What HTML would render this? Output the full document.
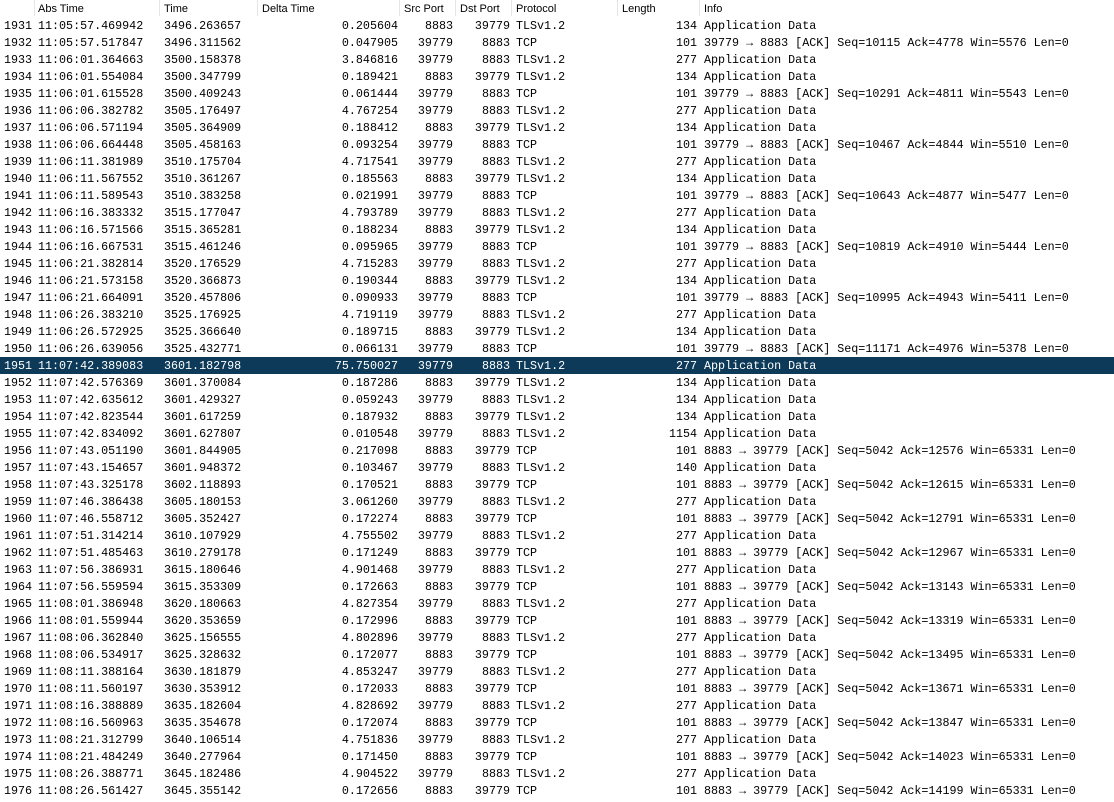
<!DOCTYPE html>
<html><head><meta charset="utf-8"><style>
body{margin:0;width:1114px;height:802px;background:#fff;overflow:hidden;position:relative;font-family:"Liberation Mono",monospace;font-size:11.7px;color:#000}
.h{position:absolute;top:0;left:0;width:1114px;height:17px;background:#fff;font-family:"Liberation Sans",sans-serif;font-size:11px;color:#000}
.h span{position:absolute;top:3px}
.h i{position:absolute;top:0;width:1px;height:16px;background:#e5e5e5}
.r{position:absolute;left:0;width:1114px;height:17px;line-height:17px;white-space:pre}
.r span{position:absolute;top:1px}
.sel{background:#0c3a58;color:#fff}
.n{left:4px}.a{left:38px}.t{left:164px}
.d{right:716px}.s{right:661px}.p{right:604px}
.pr{left:516px}.l{right:417px}.i{left:704px}
</style></head><body>
<div class="h">
<span style="left:38px">Abs Time</span><i style="left:34px"></i>
<span style="left:164px">Time</span><i style="left:159px"></i>
<span style="left:262px">Delta Time</span><i style="left:257px"></i>
<span style="left:404px">Src Port</span><i style="left:399px"></i>
<span style="left:460px">Dst Port</span><i style="left:455px"></i>
<span style="left:516px">Protocol</span><i style="left:511px"></i>
<span style="left:622px">Length</span><i style="left:617px"></i>
<span style="left:704px">Info</span><i style="left:699px"></i>
</div>
<div class="r" style="top:17px"><span class="n">1931</span><span class="a">11:05:57.469942</span><span class="t">3496.263657</span><span class="d">0.205604</span><span class="s">8883</span><span class="p">39779</span><span class="pr">TLSv1.2</span><span class="l">134</span><span class="i">Application Data</span></div>
<div class="r" style="top:34px"><span class="n">1932</span><span class="a">11:05:57.517847</span><span class="t">3496.311562</span><span class="d">0.047905</span><span class="s">39779</span><span class="p">8883</span><span class="pr">TCP</span><span class="l">101</span><span class="i">39779 → 8883 [ACK] Seq=10115 Ack=4778 Win=5576 Len=0</span></div>
<div class="r" style="top:51px"><span class="n">1933</span><span class="a">11:06:01.364663</span><span class="t">3500.158378</span><span class="d">3.846816</span><span class="s">39779</span><span class="p">8883</span><span class="pr">TLSv1.2</span><span class="l">277</span><span class="i">Application Data</span></div>
<div class="r" style="top:68px"><span class="n">1934</span><span class="a">11:06:01.554084</span><span class="t">3500.347799</span><span class="d">0.189421</span><span class="s">8883</span><span class="p">39779</span><span class="pr">TLSv1.2</span><span class="l">134</span><span class="i">Application Data</span></div>
<div class="r" style="top:85px"><span class="n">1935</span><span class="a">11:06:01.615528</span><span class="t">3500.409243</span><span class="d">0.061444</span><span class="s">39779</span><span class="p">8883</span><span class="pr">TCP</span><span class="l">101</span><span class="i">39779 → 8883 [ACK] Seq=10291 Ack=4811 Win=5543 Len=0</span></div>
<div class="r" style="top:102px"><span class="n">1936</span><span class="a">11:06:06.382782</span><span class="t">3505.176497</span><span class="d">4.767254</span><span class="s">39779</span><span class="p">8883</span><span class="pr">TLSv1.2</span><span class="l">277</span><span class="i">Application Data</span></div>
<div class="r" style="top:119px"><span class="n">1937</span><span class="a">11:06:06.571194</span><span class="t">3505.364909</span><span class="d">0.188412</span><span class="s">8883</span><span class="p">39779</span><span class="pr">TLSv1.2</span><span class="l">134</span><span class="i">Application Data</span></div>
<div class="r" style="top:136px"><span class="n">1938</span><span class="a">11:06:06.664448</span><span class="t">3505.458163</span><span class="d">0.093254</span><span class="s">39779</span><span class="p">8883</span><span class="pr">TCP</span><span class="l">101</span><span class="i">39779 → 8883 [ACK] Seq=10467 Ack=4844 Win=5510 Len=0</span></div>
<div class="r" style="top:153px"><span class="n">1939</span><span class="a">11:06:11.381989</span><span class="t">3510.175704</span><span class="d">4.717541</span><span class="s">39779</span><span class="p">8883</span><span class="pr">TLSv1.2</span><span class="l">277</span><span class="i">Application Data</span></div>
<div class="r" style="top:170px"><span class="n">1940</span><span class="a">11:06:11.567552</span><span class="t">3510.361267</span><span class="d">0.185563</span><span class="s">8883</span><span class="p">39779</span><span class="pr">TLSv1.2</span><span class="l">134</span><span class="i">Application Data</span></div>
<div class="r" style="top:187px"><span class="n">1941</span><span class="a">11:06:11.589543</span><span class="t">3510.383258</span><span class="d">0.021991</span><span class="s">39779</span><span class="p">8883</span><span class="pr">TCP</span><span class="l">101</span><span class="i">39779 → 8883 [ACK] Seq=10643 Ack=4877 Win=5477 Len=0</span></div>
<div class="r" style="top:204px"><span class="n">1942</span><span class="a">11:06:16.383332</span><span class="t">3515.177047</span><span class="d">4.793789</span><span class="s">39779</span><span class="p">8883</span><span class="pr">TLSv1.2</span><span class="l">277</span><span class="i">Application Data</span></div>
<div class="r" style="top:221px"><span class="n">1943</span><span class="a">11:06:16.571566</span><span class="t">3515.365281</span><span class="d">0.188234</span><span class="s">8883</span><span class="p">39779</span><span class="pr">TLSv1.2</span><span class="l">134</span><span class="i">Application Data</span></div>
<div class="r" style="top:238px"><span class="n">1944</span><span class="a">11:06:16.667531</span><span class="t">3515.461246</span><span class="d">0.095965</span><span class="s">39779</span><span class="p">8883</span><span class="pr">TCP</span><span class="l">101</span><span class="i">39779 → 8883 [ACK] Seq=10819 Ack=4910 Win=5444 Len=0</span></div>
<div class="r" style="top:255px"><span class="n">1945</span><span class="a">11:06:21.382814</span><span class="t">3520.176529</span><span class="d">4.715283</span><span class="s">39779</span><span class="p">8883</span><span class="pr">TLSv1.2</span><span class="l">277</span><span class="i">Application Data</span></div>
<div class="r" style="top:272px"><span class="n">1946</span><span class="a">11:06:21.573158</span><span class="t">3520.366873</span><span class="d">0.190344</span><span class="s">8883</span><span class="p">39779</span><span class="pr">TLSv1.2</span><span class="l">134</span><span class="i">Application Data</span></div>
<div class="r" style="top:289px"><span class="n">1947</span><span class="a">11:06:21.664091</span><span class="t">3520.457806</span><span class="d">0.090933</span><span class="s">39779</span><span class="p">8883</span><span class="pr">TCP</span><span class="l">101</span><span class="i">39779 → 8883 [ACK] Seq=10995 Ack=4943 Win=5411 Len=0</span></div>
<div class="r" style="top:306px"><span class="n">1948</span><span class="a">11:06:26.383210</span><span class="t">3525.176925</span><span class="d">4.719119</span><span class="s">39779</span><span class="p">8883</span><span class="pr">TLSv1.2</span><span class="l">277</span><span class="i">Application Data</span></div>
<div class="r" style="top:323px"><span class="n">1949</span><span class="a">11:06:26.572925</span><span class="t">3525.366640</span><span class="d">0.189715</span><span class="s">8883</span><span class="p">39779</span><span class="pr">TLSv1.2</span><span class="l">134</span><span class="i">Application Data</span></div>
<div class="r" style="top:340px"><span class="n">1950</span><span class="a">11:06:26.639056</span><span class="t">3525.432771</span><span class="d">0.066131</span><span class="s">39779</span><span class="p">8883</span><span class="pr">TCP</span><span class="l">101</span><span class="i">39779 → 8883 [ACK] Seq=11171 Ack=4976 Win=5378 Len=0</span></div>
<div class="r sel" style="top:357px"><span class="n">1951</span><span class="a">11:07:42.389083</span><span class="t">3601.182798</span><span class="d">75.750027</span><span class="s">39779</span><span class="p">8883</span><span class="pr">TLSv1.2</span><span class="l">277</span><span class="i">Application Data</span></div>
<div class="r" style="top:374px"><span class="n">1952</span><span class="a">11:07:42.576369</span><span class="t">3601.370084</span><span class="d">0.187286</span><span class="s">8883</span><span class="p">39779</span><span class="pr">TLSv1.2</span><span class="l">134</span><span class="i">Application Data</span></div>
<div class="r" style="top:391px"><span class="n">1953</span><span class="a">11:07:42.635612</span><span class="t">3601.429327</span><span class="d">0.059243</span><span class="s">39779</span><span class="p">8883</span><span class="pr">TLSv1.2</span><span class="l">134</span><span class="i">Application Data</span></div>
<div class="r" style="top:408px"><span class="n">1954</span><span class="a">11:07:42.823544</span><span class="t">3601.617259</span><span class="d">0.187932</span><span class="s">8883</span><span class="p">39779</span><span class="pr">TLSv1.2</span><span class="l">134</span><span class="i">Application Data</span></div>
<div class="r" style="top:425px"><span class="n">1955</span><span class="a">11:07:42.834092</span><span class="t">3601.627807</span><span class="d">0.010548</span><span class="s">39779</span><span class="p">8883</span><span class="pr">TLSv1.2</span><span class="l">1154</span><span class="i">Application Data</span></div>
<div class="r" style="top:442px"><span class="n">1956</span><span class="a">11:07:43.051190</span><span class="t">3601.844905</span><span class="d">0.217098</span><span class="s">8883</span><span class="p">39779</span><span class="pr">TCP</span><span class="l">101</span><span class="i">8883 → 39779 [ACK] Seq=5042 Ack=12576 Win=65331 Len=0</span></div>
<div class="r" style="top:459px"><span class="n">1957</span><span class="a">11:07:43.154657</span><span class="t">3601.948372</span><span class="d">0.103467</span><span class="s">39779</span><span class="p">8883</span><span class="pr">TLSv1.2</span><span class="l">140</span><span class="i">Application Data</span></div>
<div class="r" style="top:476px"><span class="n">1958</span><span class="a">11:07:43.325178</span><span class="t">3602.118893</span><span class="d">0.170521</span><span class="s">8883</span><span class="p">39779</span><span class="pr">TCP</span><span class="l">101</span><span class="i">8883 → 39779 [ACK] Seq=5042 Ack=12615 Win=65331 Len=0</span></div>
<div class="r" style="top:493px"><span class="n">1959</span><span class="a">11:07:46.386438</span><span class="t">3605.180153</span><span class="d">3.061260</span><span class="s">39779</span><span class="p">8883</span><span class="pr">TLSv1.2</span><span class="l">277</span><span class="i">Application Data</span></div>
<div class="r" style="top:510px"><span class="n">1960</span><span class="a">11:07:46.558712</span><span class="t">3605.352427</span><span class="d">0.172274</span><span class="s">8883</span><span class="p">39779</span><span class="pr">TCP</span><span class="l">101</span><span class="i">8883 → 39779 [ACK] Seq=5042 Ack=12791 Win=65331 Len=0</span></div>
<div class="r" style="top:527px"><span class="n">1961</span><span class="a">11:07:51.314214</span><span class="t">3610.107929</span><span class="d">4.755502</span><span class="s">39779</span><span class="p">8883</span><span class="pr">TLSv1.2</span><span class="l">277</span><span class="i">Application Data</span></div>
<div class="r" style="top:544px"><span class="n">1962</span><span class="a">11:07:51.485463</span><span class="t">3610.279178</span><span class="d">0.171249</span><span class="s">8883</span><span class="p">39779</span><span class="pr">TCP</span><span class="l">101</span><span class="i">8883 → 39779 [ACK] Seq=5042 Ack=12967 Win=65331 Len=0</span></div>
<div class="r" style="top:561px"><span class="n">1963</span><span class="a">11:07:56.386931</span><span class="t">3615.180646</span><span class="d">4.901468</span><span class="s">39779</span><span class="p">8883</span><span class="pr">TLSv1.2</span><span class="l">277</span><span class="i">Application Data</span></div>
<div class="r" style="top:578px"><span class="n">1964</span><span class="a">11:07:56.559594</span><span class="t">3615.353309</span><span class="d">0.172663</span><span class="s">8883</span><span class="p">39779</span><span class="pr">TCP</span><span class="l">101</span><span class="i">8883 → 39779 [ACK] Seq=5042 Ack=13143 Win=65331 Len=0</span></div>
<div class="r" style="top:595px"><span class="n">1965</span><span class="a">11:08:01.386948</span><span class="t">3620.180663</span><span class="d">4.827354</span><span class="s">39779</span><span class="p">8883</span><span class="pr">TLSv1.2</span><span class="l">277</span><span class="i">Application Data</span></div>
<div class="r" style="top:612px"><span class="n">1966</span><span class="a">11:08:01.559944</span><span class="t">3620.353659</span><span class="d">0.172996</span><span class="s">8883</span><span class="p">39779</span><span class="pr">TCP</span><span class="l">101</span><span class="i">8883 → 39779 [ACK] Seq=5042 Ack=13319 Win=65331 Len=0</span></div>
<div class="r" style="top:629px"><span class="n">1967</span><span class="a">11:08:06.362840</span><span class="t">3625.156555</span><span class="d">4.802896</span><span class="s">39779</span><span class="p">8883</span><span class="pr">TLSv1.2</span><span class="l">277</span><span class="i">Application Data</span></div>
<div class="r" style="top:646px"><span class="n">1968</span><span class="a">11:08:06.534917</span><span class="t">3625.328632</span><span class="d">0.172077</span><span class="s">8883</span><span class="p">39779</span><span class="pr">TCP</span><span class="l">101</span><span class="i">8883 → 39779 [ACK] Seq=5042 Ack=13495 Win=65331 Len=0</span></div>
<div class="r" style="top:663px"><span class="n">1969</span><span class="a">11:08:11.388164</span><span class="t">3630.181879</span><span class="d">4.853247</span><span class="s">39779</span><span class="p">8883</span><span class="pr">TLSv1.2</span><span class="l">277</span><span class="i">Application Data</span></div>
<div class="r" style="top:680px"><span class="n">1970</span><span class="a">11:08:11.560197</span><span class="t">3630.353912</span><span class="d">0.172033</span><span class="s">8883</span><span class="p">39779</span><span class="pr">TCP</span><span class="l">101</span><span class="i">8883 → 39779 [ACK] Seq=5042 Ack=13671 Win=65331 Len=0</span></div>
<div class="r" style="top:697px"><span class="n">1971</span><span class="a">11:08:16.388889</span><span class="t">3635.182604</span><span class="d">4.828692</span><span class="s">39779</span><span class="p">8883</span><span class="pr">TLSv1.2</span><span class="l">277</span><span class="i">Application Data</span></div>
<div class="r" style="top:714px"><span class="n">1972</span><span class="a">11:08:16.560963</span><span class="t">3635.354678</span><span class="d">0.172074</span><span class="s">8883</span><span class="p">39779</span><span class="pr">TCP</span><span class="l">101</span><span class="i">8883 → 39779 [ACK] Seq=5042 Ack=13847 Win=65331 Len=0</span></div>
<div class="r" style="top:731px"><span class="n">1973</span><span class="a">11:08:21.312799</span><span class="t">3640.106514</span><span class="d">4.751836</span><span class="s">39779</span><span class="p">8883</span><span class="pr">TLSv1.2</span><span class="l">277</span><span class="i">Application Data</span></div>
<div class="r" style="top:748px"><span class="n">1974</span><span class="a">11:08:21.484249</span><span class="t">3640.277964</span><span class="d">0.171450</span><span class="s">8883</span><span class="p">39779</span><span class="pr">TCP</span><span class="l">101</span><span class="i">8883 → 39779 [ACK] Seq=5042 Ack=14023 Win=65331 Len=0</span></div>
<div class="r" style="top:765px"><span class="n">1975</span><span class="a">11:08:26.388771</span><span class="t">3645.182486</span><span class="d">4.904522</span><span class="s">39779</span><span class="p">8883</span><span class="pr">TLSv1.2</span><span class="l">277</span><span class="i">Application Data</span></div>
<div class="r" style="top:782px"><span class="n">1976</span><span class="a">11:08:26.561427</span><span class="t">3645.355142</span><span class="d">0.172656</span><span class="s">8883</span><span class="p">39779</span><span class="pr">TCP</span><span class="l">101</span><span class="i">8883 → 39779 [ACK] Seq=5042 Ack=14199 Win=65331 Len=0</span></div>
</body></html>
